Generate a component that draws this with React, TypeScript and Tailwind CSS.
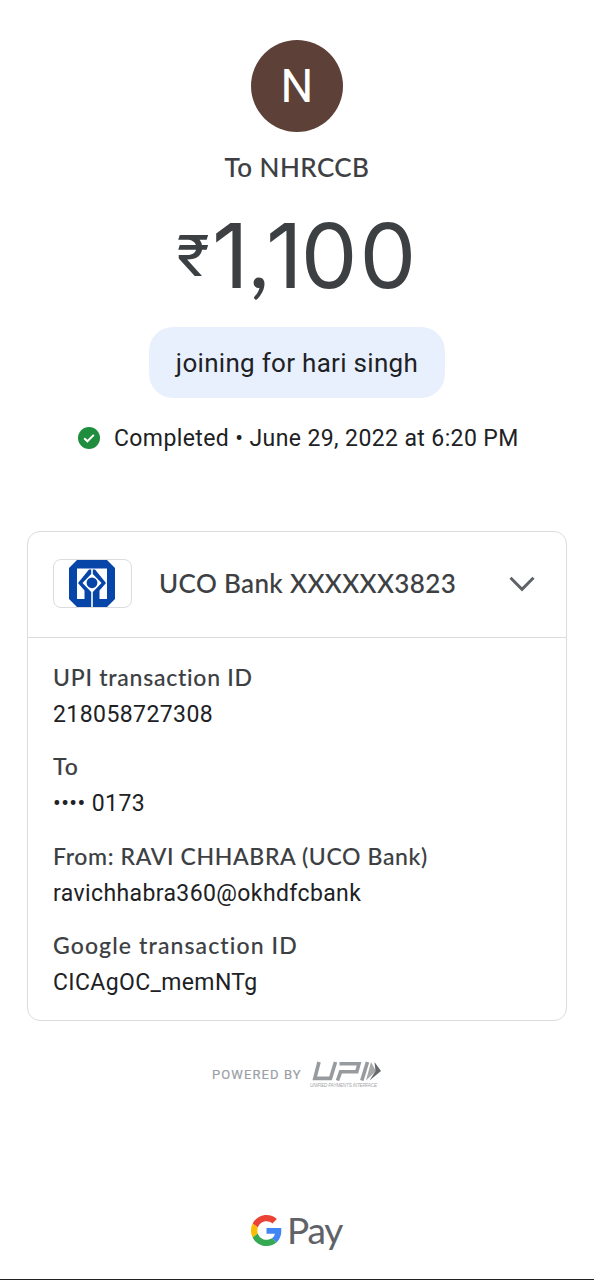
import React from "react";

const details = [
  { label: "UPI transaction ID", value: "218058727308", labelClass: "tracking-[0.750px]", valueClass: "tracking-[0.420px]" },
  { label: "To", value: "•••• 0173", labelClass: "tracking-[1px]", valueClass: "tracking-[0.400px]" },
  { label: "From: RAVI CHHABRA (UCO Bank)", value: "ravichhabra360@okhdfcbank", labelClass: "tracking-[0.630px]", valueClass: "tracking-[0.390px]" },
  { label: "Google transaction ID", value: "CICAgOC_memNTg", labelClass: "tracking-[1.120px]", valueClass: "tracking-[0.370px]" },
];

const BankLogo = () => (
  <svg className="w-[46px] h-[47px] shrink-0" viewBox="0 0 46 47">
    <path d="M8 0H38L46 8V39L38 47H8L0 39V8Z" fill="#0845a9" />
    <path d="M8 8.500H38V39H8Z" fill="#fff" />
    {/* Hands around the coin */}
    <path d="M20 9.500H26L37 23L30.500 30.500V40H15.500V30.500L9 23Z" fill="#0845a9" />
    <path d="M22.200 9V14L13.500 23L22.200 32V47H23.800V32L32.500 23L23.800 14V9Z" fill="#fff" />
    <circle cx="23" cy="22.800" r="5.400" fill="#0845a9" />
  </svg>
);

const UpiLogo = () => (
  <svg className="w-[72px] h-[28px] shrink-0" viewBox="0 0 72 28">
    <g fill="none" stroke="#989b9e" strokeWidth="3.600">
      <path d="M9 2L4.800 18.400H20.500L25.500 2" />
      <path d="M27.500 20.500L30.600 11.800H46.800L49 3.800H29.500" />
      <path d="M57.500 2L51.800 20.500" />
    </g>
    <path d="M61 2L66 11L56 20.500Z" fill="#a6a8aa" />
    <path d="M64.500 2L71 11L59.500 20.500L65.500 11Z" fill="#66696c" />
    <text x="0" y="26.500" fontSize="4.600" fontStyle="italic" textLength="67" fill="#a4a6a8" fontFamily="Liberation Sans, sans-serif">
      UNIFIED PAYMENTS INTERFACE
    </text>
  </svg>
);

const GoogleLogo = () => (
  <svg className="w-[31px] h-[31px] shrink-0" viewBox="0 0 48 48">
    <path fill="#EA4335" d="M24 9.5c3.54 0 6.71 1.22 9.21 3.6l6.85-6.85C35.9 2.38 30.47 0 24 0 14.62 0 6.51 5.38 2.56 13.22l7.98 6.19C12.43 13.72 17.74 9.5 24 9.5z" />
    <path fill="#4285F4" d="M46.98 24.55c0-1.57-.15-3.09-.38-4.55H24v9.02h12.94c-.58 2.96-2.26 5.48-4.78 7.18l7.73 6c4.51-4.18 7.09-10.36 7.09-17.65z" />
    <path fill="#FBBC05" d="M10.53 28.59c-.48-1.45-.76-2.99-.76-4.59s.27-3.14.76-4.59l-7.98-6.19C.92 16.46 0 20.12 0 24c0 3.88.92 7.54 2.56 10.78l7.97-6.19z" />
    <path fill="#34A853" d="M24 48c6.48 0 11.93-2.13 15.89-5.81l-7.73-6c-2.15 1.45-4.92 2.3-8.16 2.3-6.26 0-11.57-4.22-13.47-9.91l-7.98 6.19C6.51 42.62 14.62 48 24 48z" />
  </svg>
);

export default function App() {
  return (
    <div className="w-full h-[1280px] overflow-hidden bg-white border-b border-[#202124] flex flex-col items-center pt-10 font-['Roboto',sans-serif] text-[#202124]">
      <div className="w-[92px] h-[92px] shrink-0 rounded-full bg-[#5d4037] flex justify-center items-center text-white text-[46px] leading-none">
        N
      </div>

      <h1 className="mt-[19px] h-8 leading-8 text-[26px] tracking-[0.450px] font-medium text-[#3c4043] font-['Lato',sans-serif] [-webkit-text-stroke:0.1px] whitespace-nowrap">
        To NHRCCB
      </h1>

      {/* Amount */}
      <div className="mt-[23px] h-[100px] pl-0.5 flex items-start text-[#3c4043] font-['Inter',sans-serif] whitespace-nowrap leading-[100px]">
        <span className="mr-1 text-[56px] scale-x-110">₹</span>
        <span className="text-[90px]">
          1<span className="font-['Lato',sans-serif] leading-none tracking-[-3px]">,</span>
          <span className="tracking-[-2px]">1</span>
          <span className="tracking-[2px]">00</span>
        </span>
      </div>

      <div className="mt-[21px] w-[296px] h-[71px] shrink-0 rounded-3xl bg-[#e8f0fe] flex justify-center items-center pt-0.5 text-[26px] tracking-[0.300px] whitespace-nowrap">
        joining for hari singh
      </div>

      <div className="mt-6 h-8 w-[438px] flex items-center">
        <svg className="w-[22px] h-[22px] shrink-0" viewBox="0 0 22 22">
          <circle cx="11" cy="11" r="11" fill="#1e8e3e" />
          <path d="M6.200 11.200L9.400 14.300L15.800 7.900" fill="none" stroke="#fff" strokeWidth="2" />
        </svg>
        <span className="ml-3.5 pt-0.5 text-[23px] tracking-[0.390px] whitespace-nowrap">Completed • June 29, 2022 at 6:20 PM</span>
      </div>

      {/* Bank and transaction details */}
      <div className="mt-[77px] w-[540px] h-[490px] shrink-0 border border-[#dadce0] rounded-[13px]">
        <div className="h-[106px] border-b border-[#dadce0] pl-[25px] pr-[31px] pb-[3px] flex items-center">
          <div className="w-[79px] h-[49px] pr-px border border-[#dadce0] rounded-lg flex justify-center items-center">
            <BankLogo />
          </div>
          <span className="ml-[27px] text-[26px] tracking-[0.370px] font-medium text-[#3c4043] font-['Lato',sans-serif] [-webkit-text-stroke:0.1px] whitespace-nowrap">
            UCO Bank XXXXXX3823
          </span>
          <svg className="ml-auto mt-0.5 w-[26px] h-4" viewBox="0 0 26 16">
            <path d="M1.500 1.800L13 13.300L24.500 1.800" fill="none" stroke="#5f6368" strokeWidth="3" />
          </svg>
        </div>
        <div className="pt-[21px] pl-[25px] flex flex-col gap-[15.250px]">
          {details.map((item) => (
            <div key={item.label} className="whitespace-nowrap">
              <div className={`h-[38px] leading-9 text-[23px] font-medium text-[#3c4043] font-['Lato',sans-serif] [-webkit-text-stroke:0.1px] ${item.labelClass}`}>
                {item.label}
              </div>
              <div className={`h-9 leading-9 text-[23px] ${item.valueClass}`}>{item.value}</div>
            </div>
          ))}
        </div>
      </div>

      <div className="mt-[38px] h-[30px] w-[170px] flex items-center text-[#9aa0a6]">
        <span className="w-[98px] pt-0.5 text-[13px] tracking-[1.100px] [-webkit-text-stroke:0.2px] whitespace-nowrap">POWERED BY</span>
        <UpiLogo />
      </div>

      <div className="mt-[121px] w-[92px] flex items-center">
        <GoogleLogo />
        <span className="ml-[5px] text-[37px] leading-[40px] tracking-[-1.200px] text-[#5f6368] font-['Lato',sans-serif] [-webkit-text-stroke:0.1px]">Pay</span>
      </div>
    </div>
  );
}
